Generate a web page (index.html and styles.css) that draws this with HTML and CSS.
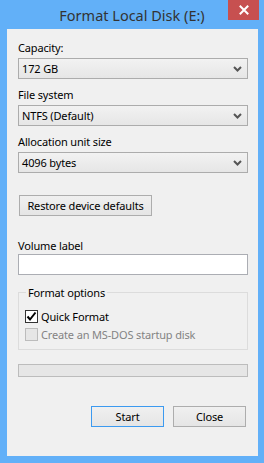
FILE: index.html
```html
<!DOCTYPE html>
<html>
<head>
<meta charset="utf-8">
<link rel="stylesheet" href="styles.css">
</head>
<body>
<div class="window">
  <div class="titlebar">
    <div class="title">Format Local Disk (E:)</div>
    <div class="close-btn"><svg width="10" height="10" viewBox="0 0 10 10"><path d="M1.5 1.5 L8.5 8.5 M8.5 1.5 L1.5 8.5" stroke="#fff" stroke-width="2" stroke-linecap="square"/></svg></div>
  </div>
  <div class="client">
    <div class="label">Capacity:</div>
    <div class="select"><span>172 GB</span><svg class="chev" width="9" height="6" viewBox="0 0 9 6"><path d="M1 1 L4.5 4.5 L8 1" fill="none" stroke="#555" stroke-width="2"/></svg></div>
    <div class="label gap">File system</div>
    <div class="select"><span>NTFS (Default)</span><svg class="chev" width="9" height="6" viewBox="0 0 9 6"><path d="M1 1 L4.5 4.5 L8 1" fill="none" stroke="#555" stroke-width="2"/></svg></div>
    <div class="label gap">Allocation unit size</div>
    <div class="select"><span>4096 bytes</span><svg class="chev" width="9" height="6" viewBox="0 0 9 6"><path d="M1 1 L4.5 4.5 L8 1" fill="none" stroke="#555" stroke-width="2"/></svg></div>
    <div class="btn restore">Restore device defaults</div>
    <div class="label vol">Volume label</div>
    <div class="input"></div>
    <fieldset class="group">
      <legend>Format options</legend>
      <div class="check-row"><span class="box checked"><svg width="11" height="11" viewBox="0 0 11 11"><path d="M1.5 5.5 L4 8.5 L9.5 1.5" fill="none" stroke="#000" stroke-width="2"/></svg></span><span>Quick Format</span></div>
      <div class="check-row disabled"><span class="box"></span><span>Create an MS-DOS startup disk</span></div>
    </fieldset>
    <div class="progress"></div>
    <div class="actions">
      <div class="btn action default">Start</div>
      <div class="btn action">Close</div>
    </div>
  </div>
</div>
</body>
</html>
```

FILE: styles.css
```css
html, body {
  margin: 0;
  padding: 0;
}
body {
  width: 264px;
  height: 463px;
  background: #62b0f8;
  font-family: "Segoe UI", "Noto Sans", sans-serif;
  font-size: 11px;
  letter-spacing: -0.15px;
  color: #000;
  overflow: hidden;
}
.window {
  display: flex;
  flex-direction: column;
  height: 463px;
}
.titlebar {
  height: 29px;
  display: flex;
  justify-content: center;
  align-items: center;
  position: relative;
}
.title {
  font-size: 14.5px;
  letter-spacing: 0;
  color: #333;
  margin-top: 1px;
}
.close-btn {
  position: absolute;
  left: 228px;
  top: 0;
  width: 31px;
  height: 20px;
  background: #c75050;
  display: flex;
  align-items: center;
  justify-content: center;
}
.client {
  margin: 0 6px 7px 7px;
  flex: 1;
  background: #f0f0f0;
  border-top: 1px solid #f0f0f0;
  padding: 10px 10px 0 11px;
  display: flex;
  flex-direction: column;
  box-sizing: border-box;
}
.label {
  line-height: 15px;
  height: 15px;
  margin-bottom: 3px;
}
.label.gap {
  margin-top: 8px;
}
.select {
  height: 21px;
  box-sizing: border-box;
  border: 1px solid #acacac;
  background: linear-gradient(#f2f2f2, #e6e6e6);
  display: flex;
  align-items: center;
  justify-content: space-between;
  padding: 0 5px 0 3px;
}
.select span {
  line-height: 15px;
}
.chev {
  display: block;
}
.btn {
  height: 21px;
  box-sizing: border-box;
  border: 1px solid #adadad;
  background: linear-gradient(#f0f0f0, #e5e5e5);
  display: flex;
  align-items: center;
  justify-content: center;
  line-height: 15px;
}
.restore {
  margin-top: 22px;
  margin-left: 1px;
  width: 133px;
}
.label.vol {
  margin-top: 22px;
  margin-bottom: 1px;
}
.input {
  height: 21px;
  box-sizing: border-box;
  border: 1px solid #abadb3;
  background: #fff;
}
.group {
  margin: 10px 0 0 0;
  padding: 0 6px 0 6px;
  border: 1px solid #dcdcdc;
  height: 65px;
  box-sizing: border-box;
}
.group legend {
  padding: 0 2px;
  margin-left: 1px;
  line-height: 15px;
}
.check-row {
  display: flex;
  align-items: center;
  height: 18px;
  gap: 3px;
}
.check-row:first-of-type {
  margin-top: 7px;
}
.box {
  width: 13px;
  height: 13px;
  box-sizing: border-box;
  border: 1px solid #333;
  background: #fff;
  display: flex;
  align-items: center;
  justify-content: center;
}
.disabled {
  color: #838383;
}
.disabled .box {
  border-color: #bcbcbc;
  background: #e6e6e6;
}
.progress {
  margin-top: 14px;
  height: 13px;
  box-sizing: border-box;
  border: 1px solid #bcbcbc;
  background: #e6e6e6;
}
.actions {
  margin-top: 29px;
  display: flex;
  justify-content: flex-end;
  gap: 9px;
  padding-right: 2px;
}
.action {
  width: 73px;
}
.action.default {
  border-color: #3c9af0;
}
```
